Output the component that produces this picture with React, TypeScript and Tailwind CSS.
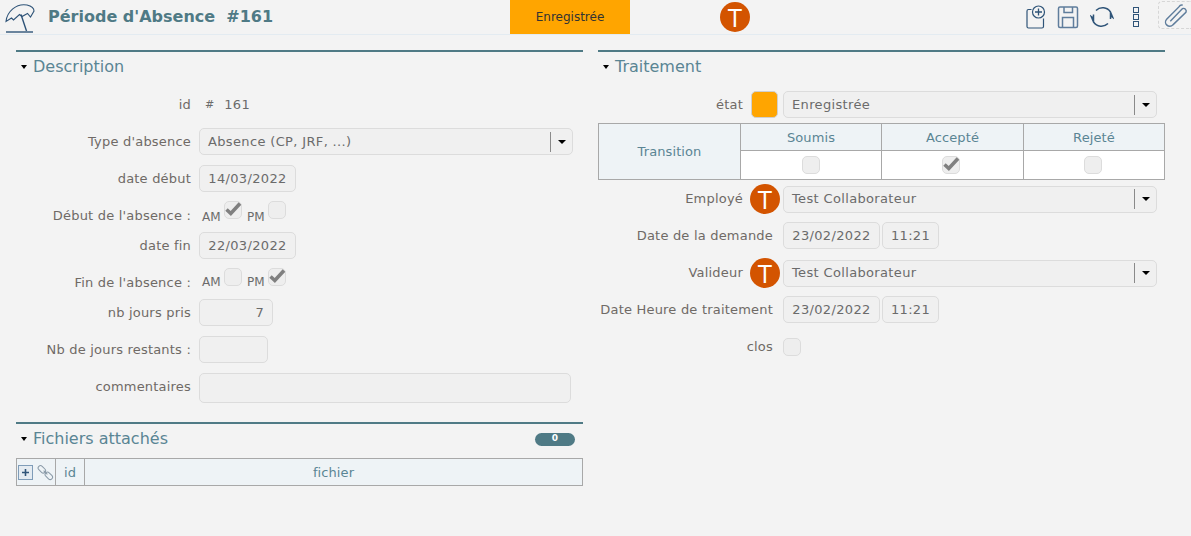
import type { ReactNode } from 'react';

// couleurs de l'appli : titres #4f7a85 / libellés #6f6a66 / champs #f0f0f0
function Check({ on }: { on?: boolean }) {
  return (
    <span className="relative block w-[18px] h-[18px] rounded-[5px] border border-[#dcdcdc] bg-[#eeeeee]">
      {on && (
        <svg viewBox="0 0 18 18" className="absolute left-[-1px] top-[-2px] w-[18px] h-[18px]">
          <path d="M2.500 9.500 L6.800 13.500 L16 3.500" fill="none" stroke="#808080" strokeWidth="3.600" />
        </svg>
      )}
    </span>
  );
}

function Field({ className, children }: { className: string; children?: ReactNode }) {
  return (
    <div className={'flex items-center h-[27px] rounded-[5px] border border-[#dcdcdc] bg-[#f0f0f0] text-[#6b6b6b] tracking-[0.35px] ' + className}>
      {children}
    </div>
  );
}

function Select({ className, children }: { className: string; children: ReactNode }) {
  return (
    <Field className={'pl-2 ' + className}>
      <span className="flex-1">{children}</span>
      <span className="w-px h-[20px] bg-[#8a8a8a]" />
      <span className="w-[21px] flex justify-center">
        <span className="w-0 h-0 border-x-[4px] border-x-transparent border-t-[4px] border-t-black" />
      </span>
    </Field>
  );
}

function Label({ className, children }: { className: string; children: ReactNode }) {
  return <div className={'text-right text-[#6f6a66] tracking-[0.2px] whitespace-nowrap shrink-0 ' + className}>{children}</div>;
}

function SectionTitle({ children, right }: { children: ReactNode; right?: ReactNode }) {
  return (
    <div className="border-t-[2px] border-[#4f7a85] h-[32px] flex items-center pl-[5px]">
      <span className="w-0 h-0 border-x-[3.5px] border-x-transparent border-t-[4px] border-t-black mr-[5px]" />
      <span className="text-[16px] ml-[1px] text-[#5a8594] leading-none">{children}</span>
      {right}
    </div>
  );
}

function Avatar() {
  return (
    <div className="w-[30px] h-[30px] rounded-full bg-[#d35400] text-white text-[26px] leading-none flex items-center justify-center shrink-0 font-['Open_Sans',sans-serif]">
      T
    </div>
  );
}

function IconUmbrella() {
  return (
    <svg viewBox="0 0 36 34" className="w-[36px] h-[34px]" fill="none" stroke="#2f5478" strokeWidth="1.100">
      <path d="M1 21.500 C2 12 11 3 22 5 C26 6 29 8 29 11 L25.500 17 L22.500 13.500 L17 16.500 L14.500 14.500 L8.500 20 L6.500 18 Z" />
      <path d="M16 14.500 L21.500 31" strokeWidth="1.400" />
      <path d="M1 32 H28" strokeWidth="1.400" />
    </svg>
  );
}

function ToolIcons() {
  return (
    <div className="flex items-center ml-auto h-full">
      <svg viewBox="0 0 20 24" className="w-[20px] h-[24px]" fill="none" stroke="#2f5478" strokeWidth="1.200">
        <path d="M5.500 4.500 H2.500 A1.500 1.500 0 0 0 1 6 V21.500 A1.500 1.500 0 0 0 2.500 23 H16 A1.500 1.500 0 0 0 17.500 21.500 V13.500" />
        <circle cx="12.500" cy="7" r="6" />
        <path d="M12.500 3.500 V10.500 M9 7 H16" strokeWidth="1.300" />
      </svg>
      <svg viewBox="0 0 22 24" className="w-[22px] h-[24px] ml-[11px]" fill="none" stroke="#5f7d9c" strokeWidth="1.500">
        <rect x="1.500" y="2" width="19" height="20.500" rx="1.500" />
        <path d="M7 2 V7.500 H15.500 V2 M5.500 22.500 V12.500 H16.500 V22.500" />
      </svg>
      <svg viewBox="0 0 24 24" className="w-[24px] h-[24px] ml-[11px]" fill="none" stroke="#2f5478" strokeWidth="1.500">
        <path d="M6 5.500 A9.500 9.500 0 0 1 20.500 7 L22.800 12.500 L20 10.500 M20.500 7 V14" />
        <path d="M18 18.500 A9.500 9.500 0 0 1 3.500 17 L1.200 11.500 L4 13.500 M3.500 17 V9.500" />
      </svg>
      <div className="flex flex-col gap-[1px] ml-[19px] mr-[19px]">
        <span className="w-[6px] h-[6px] border border-[#2f5478]" />
        <span className="w-[6px] h-[6px] border border-[#2f5478]" />
        <span className="w-[6px] h-[6px] border border-[#2f5478]" />
      </div>
      <div className="w-[33px] h-[28px] -mt-[4px] border border-dashed border-r-0 border-[#d6d6d6] rounded-l-[4px] flex items-center justify-center">
        <svg viewBox="0 0 24 24" className="w-[25px] h-[25px]" fill="none" stroke="#5f7d9c" strokeWidth="1.400">
          <path d="M7 17.500 L18.500 5.500 A2.600 2.600 0 0 1 22 9 L9.500 21 A4 4 0 0 1 3.500 15.500 L15.500 3.500 A3 3 0 0 1 19 2" />
        </svg>
      </div>
    </div>
  );
}

export default function App() {
  return (
    <div className="w-[1191px] h-[536px] bg-[#f3f3f3] overflow-hidden font-['DejaVu_Sans',sans-serif] text-[13px]">
      {/* entête */}
      <header className="h-[35px] border-b border-[#e3ebf1] flex items-center">
        <div className="ml-[5px] w-[36px]"><IconUmbrella /></div>
        <div className="ml-[7px] w-[462px] text-[#4f7a85] font-bold text-[16px] whitespace-pre">Période d'Absence  #161</div>
        <div className="w-[120px] h-[34px] self-start bg-[#ffa500] flex items-center justify-center text-[12px] text-[#333]">Enregistrée</div>
        <div className="ml-[90px]"><Avatar /></div>
        <ToolIcons />
      </header>

      <div className="flex pl-[16px] pt-[15px] gap-[15px]">
        {/* colonne gauche */}
        <div className="w-[567px]">
          <SectionTitle>Description</SectionTitle>
          <div className="flex flex-col mt-[6px]">
            <div className="flex items-center gap-[8px] h-[28px] mt-[3px] -mb-[1px]">
              <Label className="w-[175px]">id</Label>
              <span className="text-[#6b6b6b] text-[11px] ml-[6px] mr-[2px]">#</span>
              <span className="text-[#6b6b6b] tracking-[0.35px]">161</span>
            </div>
            <div className="flex items-center gap-[8px] mt-[10px]">
              <Label className="w-[175px]">Type d'absence</Label>
              <Select className="w-[374px]">Absence (CP, JRF, ...)</Select>
            </div>
            <div className="flex items-center gap-[8px] mt-[10px]">
              <Label className="w-[175px]">date début</Label>
              <Field className="w-[97px] justify-center">14/03/2022</Field>
            </div>
            <div className="flex items-start gap-[8px] h-[30px] mt-[9px]">
              <Label className="w-[175px] mt-[5px]">Début de l'absence :</Label>
              <div className="flex items-start ml-[3px] text-[#6b6b6b] text-[12px]">
                <span className="mt-[7px] w-[22px]">AM</span><Check on />
                <span className="mt-[7px] ml-[5px] w-[21px]">PM</span><Check />
              </div>
            </div>
            <div className="flex items-center gap-[8px] mt-[1px]">
              <Label className="w-[175px]">date fin</Label>
              <Field className="w-[97px] justify-center">22/03/2022</Field>
            </div>
            <div className="flex items-start gap-[8px] h-[31px] mt-[9px]">
              <Label className="w-[175px] mt-[5px]">Fin de l'absence :</Label>
              <div className="flex items-start ml-[3px] text-[#6b6b6b] text-[12px]">
                <span className="mt-[5px] w-[22px]">AM</span><Check />
                <span className="mt-[5px] ml-[5px] w-[21px]">PM</span><Check on />
              </div>
            </div>
            <div className="flex items-center gap-[8px]">
              <Label className="w-[175px]">nb jours pris</Label>
              <Field className="w-[74px] justify-end pr-[8px]">7</Field>
            </div>
            <div className="flex items-center gap-[8px] mt-[10px]">
              <Label className="w-[175px]">Nb de jours restants :</Label>
              <Field className="w-[69px]" />
            </div>
            <div className="flex items-center gap-[8px] mt-[10px]">
              <Label className="w-[175px] -mt-[2px]">commentaires</Label>
              <Field className="w-[372px] h-[30px]" />
            </div>
          </div>

          <div className="mt-[19px]">
            <SectionTitle right={
              <span className="ml-auto mr-[8px] w-[40px] h-[13px] rounded-full bg-[#4f7a85] text-white text-[9px] font-bold flex items-center justify-center">0</span>
            }>Fichiers attachés</SectionTitle>
          </div>
          {/* table des fichiers */}
          <div className="mt-[4px] h-[28px] border border-[#a8a8a8] bg-[#eef3f6] flex items-center text-[#5a8594] tracking-[0.1px]">
            <div className="w-[39px] h-full border-r border-[#a8a8a8] flex items-center pl-[1px]">
              <span className="w-[15px] h-[15px] border border-[#7f9cb8] bg-[#e4ebf1] flex items-center justify-center">
                <svg viewBox="0 0 9 9" className="w-[9px] h-[9px]"><path d="M4.500 1 V8 M1 4.500 H8" stroke="#2f5478" strokeWidth="1.600" /></svg>
              </span>
              <svg viewBox="0 0 18 18" className="w-[17px] h-[17px] ml-[4px]" fill="none" stroke="#8a9aa8" strokeWidth="1.100">
                <rect x="0.700" y="3" width="9" height="5" rx="2.500" transform="rotate(45 5 5.500)" />
                <rect x="8" y="10" width="9" height="5" rx="2.500" transform="rotate(45 12.500 12.500)" />
                <path d="M7 7 L11 11" />
              </svg>
            </div>
            <div className="w-[29px] h-full border-r border-[#a8a8a8] flex items-center justify-center pt-[1px]">id</div>
            <div className="flex-1 text-center pt-[1px]">fichier</div>
          </div>
        </div>

        {/* colonne droite */}
        <div className="w-[567px]">
          <SectionTitle>Traitement</SectionTitle>
          <div className="flex flex-col mt-[9px]">
            <div className="flex items-center">
              <Label className="w-[145px]">état</Label>
              <span className="ml-[8px] w-[27px] h-[27px] rounded-[5px] border border-[#cfcfcf] bg-[#ffa500]" />
              <Select className="ml-[5px] w-[374px]">Enregistrée</Select>
            </div>
            <table className="mt-[5px] w-[567px] border-collapse table-fixed text-[#5a8594] tracking-[0.1px]">
              <tbody>
                <tr className="h-[27px]">
                  <td rowSpan={2} className="w-[142px] border border-[#a8a8a8] bg-[#eef3f6] text-center pt-[1px]">Transition</td>
                  <td className="w-[141px] border border-[#a8a8a8] bg-[#eef3f6] text-center pt-[1px]">Soumis</td>
                  <td className="w-[142px] border border-[#a8a8a8] bg-[#eef3f6] text-center pt-[1px]">Accepté</td>
                  <td className="border border-[#a8a8a8] bg-[#eef3f6] text-center pt-[1px]">Rejeté</td>
                </tr>
                <tr className="h-[29px]">
                  <td className="border border-[#a8a8a8] bg-white"><div className="flex justify-center"><Check /></div></td>
                  <td className="border border-[#a8a8a8] bg-white"><div className="flex justify-center -ml-[4px]"><Check on /></div></td>
                  <td className="border border-[#a8a8a8] bg-white"><div className="flex justify-center -ml-[2px]"><Check /></div></td>
                </tr>
              </tbody>
            </table>
            <div className="flex items-center mt-[4px]">
              <Label className="w-[145px]">Employé</Label>
              <div className="ml-[7px]"><Avatar /></div>
              <Select className="ml-[3px] w-[374px]">Test Collaborateur</Select>
            </div>
            <div className="flex items-center mt-[8px]">
              <Label className="w-[175px]">Date de la demande</Label>
              <Field className="ml-[10px] w-[97px] justify-center">23/02/2022</Field>
              <Field className="ml-[2px] w-[57px] justify-center">11:21</Field>
            </div>
            <div className="flex items-center mt-[9px]">
              <Label className="w-[145px]">Valideur</Label>
              <div className="ml-[7px]"><Avatar /></div>
              <Select className="ml-[3px] w-[374px]">Test Collaborateur</Select>
            </div>
            <div className="flex items-center mt-[8px]">
              <Label className="w-[175px]">Date Heure de traitement</Label>
              <Field className="ml-[10px] w-[97px] justify-center">23/02/2022</Field>
              <Field className="ml-[2px] w-[57px] justify-center">11:21</Field>
            </div>
            <div className="flex items-center mt-[14px]">
              <Label className="w-[175px]">clos</Label>
              <span className="ml-[10px]"><Check /></span>
            </div>
          </div>
        </div>
      </div>
    </div>
  );
}
